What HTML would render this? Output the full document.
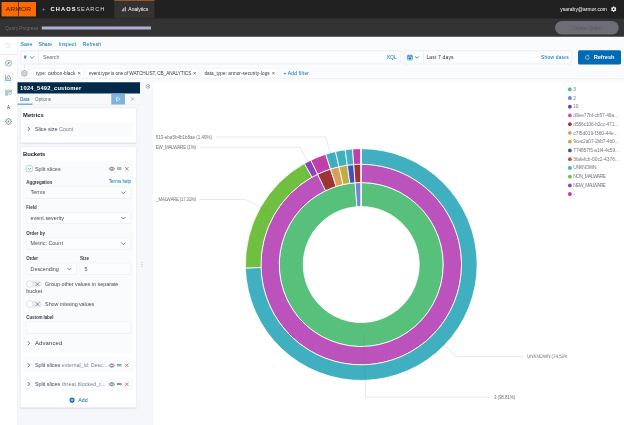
<!DOCTYPE html>
<html><head><meta charset="utf-8">
<style>
*{box-sizing:border-box;margin:0;padding:0}
html,body{width:624px;height:425px;overflow:hidden;background:#fff;font-family:"Liberation Sans",sans-serif;}
body{position:relative}
.a{position:absolute}
.t{position:absolute;white-space:nowrap;line-height:1}
.blue{color:#006bb4}
.box{position:absolute;background:#fbfcfd;border:2px solid #dfe3ea;border-radius:4px}
.pill{position:absolute;background:#fff;border:1.6px solid #dde2ea;border-radius:6px;height:37.2px;top:274.8px}
.cl{font-size:18px;color:#70737a}
.ptx{top:283.2px;font-size:18.8px;color:#343741}
.pill span{position:absolute;left:12px;top:9.2px;font-size:17.6px;color:#343741;white-space:nowrap;line-height:1}
.lab{font-size:18px;font-weight:bold;color:#3a3e48}
.inp{position:absolute;background:#fcfdfe;border:1.6px solid #dfe3ea;border-radius:4px;height:45.6px;box-shadow:0 1.6px 2.4px rgba(150,160,180,0.15)}
.leg{position:absolute;left:2293.2px;font-size:19.6px;color:#767a84;white-space:nowrap;line-height:1}
.dot{position:absolute;left:2272px;width:15.2px;height:15.2px;border-radius:50%;margin-top:-1.6px}
</style></head><body><div id="root" style="position:absolute;left:0;top:0;width:2496px;height:1700px;transform-origin:0 0;transform:scale(0.25);filter:contrast(1.0001)">

<!-- top dark bars -->
<div class="a" style="left:0;top:0;width:2496px;height:147.6px;background:#333333"></div>
<div class="a" style="left:0;top:0;width:2496px;height:74.4px;background:#212121"></div>
<!-- armor logo -->
<div class="a" style="left:5.6px;top:8px;width:138.4px;height:57.6px;background:#ff6a00;box-shadow:0 0 0 1.6px #0c1622"></div>
<div class="a" style="left:72.4px;top:8px;width:2.4px;height:57.6px;background:#3a2a1a"></div>
<svg class="a" style="left:0;top:0" width="160" height="76" viewBox="0 0 40 19"><text x="5.8" y="10.9" font-family="Liberation Sans, sans-serif" font-size="4.500" fill="#2e1804" textLength="25.400" lengthAdjust="spacingAndGlyphs">ARMOR</text></svg>
<div class="t" style="left:168.4px;top:26.4px;font-size:23.2px;color:#9a9a9a">+</div>
<div class="t" style="left:202.4px;top:24.8px;font-size:22.8px;color:#fff;font-weight:bold;letter-spacing:4.25px">CHAOS</div><div class="t" style="left:306px;top:24.8px;font-size:22.8px;color:#ddd;letter-spacing:3.23px">SEARCH</div>
<!-- analytics tab -->
<div class="a" style="left:456.8px;top:0;width:161.2px;height:74.4px;background:#333333;border-top:3.6px solid #c4621b"></div>
<svg class="a" style="left:486px;top:26px" width="20" height="20" viewBox="0 0 5 5"><rect x="0.3" y="3" width="0.9" height="2" fill="#ddd"/><rect x="1.8" y="1.6" width="0.9" height="3.4" fill="#ddd"/><rect x="3.3" y="0.2" width="0.9" height="4.8" fill="#ddd"/></svg>
<div class="t" style="left:513.2px;top:26.4px;font-size:20px;color:#fff">Analytics</div>
<div class="t" style="left:2240.8px;top:26.8px;font-size:19.6px;color:#fff;letter-spacing:0.34px">ysaraby@armor.com</div>
<svg class="a" style="left:2441.6px;top:24px" width="25.6" height="25.6" viewBox="0 0 24 24"><path fill="#fff" d="M19.4 13c.04-.3.06-.7.06-1s-.02-.7-.07-1l2.100-1.650c.2-.15.250-.42.130-.64l-2-3.460c-.12-.22-.39-.3-.61-.22l-2.490 1c-.52-.4-1.080-.73-1.690-.98l-.38-2.650C14.400 2.180 14.200 2 13.950 2h-4c-.25 0-.46.180-.49.420l-.38 2.650c-.61.250-1.170.59-1.690.98l-2.490-1c-.23-.09-.49 0-.61.220l-2 3.460c-.13.220-.07.490.12.640L4.500 11c-.04.300-.07.650-.07 1s.02.700.07 1l-2.100 1.650c-.19.150-.24.420-.12.640l2 3.460c.12.220.39.300.61.220l2.490-1c.52.400 1.080.73 1.690.98l.38 2.650c.03.240.24.420.49.420h4c.25 0 .46-.18.490-.42l.38-2.650c.61-.25 1.170-.59 1.690-.98l2.490 1c.23.090.490 0 .61-.22l2-3.460c.12-.22.070-.49-.12-.64L19.400 13zM12 15.500c-1.930 0-3.500-1.570-3.500-3.500s1.570-3.500 3.500-3.500 3.500 1.570 3.500 3.500-1.570 3.500-3.500 3.500z"/></svg>
<!-- query progress -->
<div class="t" style="left:20.8px;top:106.4px;font-size:18.8px;color:#6a6d73;letter-spacing:0.01px">Query Progress</div>
<div class="a" style="left:166.8px;top:106px;width:437.2px;height:12px;background:#aab3cf"></div>
<div class="a" style="left:2220px;top:84px;width:255.2px;height:54.4px;border-radius:28px;background:#6c6e75"></div>
<div class="t" style="left:2289.2px;top:104px;font-size:18.8px;color:#54565c;letter-spacing:0.16px">Cancel Query</div>

<!-- left nav -->
<div class="a" style="left:0;top:147.2px;width:69.6px;height:1552.8px;background:#fff;border-right:2px solid #d3dae6"></div>
<div class="a" style="left:0;top:217.6px;width:69.6px;height:2px;background:#d3dae6"></div>
<div class="a" style="left:12.8px;top:290.4px;width:41.6px;height:41.6px;background:#f2f5f9;border-radius:4px"></div>
<svg class="a" style="left:21.2px;top:170.4px" width="23.2" height="23.2" viewBox="0 0 16 16"><circle cx="8" cy="8" r="6.6" fill="none" stroke="#d3d6db" stroke-width="1.5"/><path d="M8 4.5V8.5H10.8" fill="none" stroke="#d3d6db" stroke-width="1.4"/></svg>
<svg class="a" style="left:19.6px;top:239.2px" width="28" height="28" viewBox="0 0 16 16"><circle cx="8" cy="8" r="6.8" fill="none" stroke="#6a6e78" stroke-width="1.3"/><path d="M11.6 4.4L9.3 9.3L4.4 11.6L6.7 6.7Z" fill="#1fa89b"/></svg>
<svg class="a" style="left:19.6px;top:298.4px" width="25.6" height="25.6" viewBox="0 0 16 16"><path d="M1 0.5V15H15.5" fill="none" stroke="#3fb5a8" stroke-width="1.8"/><path d="M4.8 12.5V6.8L9.2 2.8L13.6 6.8V12.5" fill="none" stroke="#555a66" stroke-width="1.5"/><path d="M9.2 9V12.5" stroke="#555a66" stroke-width="1.4"/></svg>
<svg class="a" style="left:20.4px;top:358.4px" width="27.2" height="24.8" viewBox="0 0 17 15.500"><rect x="1" y="0.8" width="15" height="3.6" rx="1" fill="none" stroke="#6a6e78" stroke-width="1.4"/><rect x="1" y="6.4" width="6" height="3.200" rx="0.800" fill="none" stroke="#3fb5a8" stroke-width="1.4"/><rect x="10" y="5.800" width="6" height="6.400" rx="1.500" fill="none" stroke="#3fb5a8" stroke-width="1.5"/><rect x="1" y="11.400" width="6" height="3.200" rx="0.800" fill="none" stroke="#6a6e78" stroke-width="1.4"/></svg>
<div class="a" style="left:17.6px;top:411.6px;width:32px;height:32px;border-radius:50%;border:1.6px solid #e8e8ea"></div><div class="t" style="left:27.6px;top:418.8px;font-size:18px;color:#3a3d46">A</div>
<svg class="a" style="left:19.6px;top:472.4px" width="28" height="28" viewBox="0 0 16 16"><path d="M6.80 1.10L9.20 1.10L9.26 2.75L10.82 3.40L12.03 2.27L13.73 3.97L12.60 5.18L13.25 6.74L14.90 6.80L14.90 9.20L13.25 9.26L12.60 10.82L13.73 12.03L12.03 13.73L10.82 12.60L9.26 13.25L9.20 14.90L6.80 14.90L6.74 13.25L5.18 12.60L3.97 13.73L2.27 12.03L3.40 10.82L2.75 9.26L1.10 9.20L1.10 6.80L2.75 6.74L3.40 5.18L2.27 3.97L3.97 2.27L5.18 3.40L6.74 2.75Z" fill="none" stroke="#5a5e68" stroke-width="1.3"/><circle cx="8" cy="8" r="2.3" fill="#3fb5a8"/></svg>

<!-- header area bg -->
<div class="a" style="left:70.4px;top:147.2px;width:2425.6px;height:181.6px;background:#fafbfd"></div>
<div class="t blue" style="left:82.4px;top:167.6px;font-size:20.4px">Save</div>
<div class="t blue" style="left:154.4px;top:167.6px;font-size:20.4px">Share</div>
<div class="t blue" style="left:235.2px;top:167.6px;font-size:20.4px;letter-spacing:0.61px">Inspect</div>
<div class="t blue" style="left:331.2px;top:167.6px;font-size:20.4px;letter-spacing:0.37px">Refresh</div>

<!-- query bar -->
<div class="box" style="left:82.4px;top:202.4px;width:1520px;height:54.4px"></div>
<div class="a" style="left:154.4px;top:202.4px;width:2px;height:54.4px;background:#dfe3ea"></div>
<div class="t blue" style="left:94.8px;top:219.2px;font-size:19.2px;font-weight:bold;font-style:italic">#</div>
<svg class="a" style="left:118.4px;top:222px" width="20.8" height="13.6" viewBox="0 0 10 6"><path d="M1 1L5 5L9 1" fill="none" stroke="#006bb4" stroke-width="1.300"/></svg>
<div class="t" style="left:172px;top:218.8px;font-size:20.8px;color:#6b6f78;letter-spacing:-0.12px">Search</div>
<div class="t blue" style="left:1549.2px;top:220px;font-size:18.4px">KQL</div>
<div class="a" style="left:97.2px;top:256.8px;width:2px;height:18.4px;background:#d3dae6"></div>

<!-- date picker -->
<div class="box" style="left:1615.2px;top:202.4px;width:674px;height:54.4px"></div>
<div class="a" style="left:1693.2px;top:202.4px;width:2px;height:54.4px;background:#dfe3ea"></div>
<svg class="a" style="left:1627.2px;top:217.2px" width="24.8" height="25.6" viewBox="0 0 16 16"><rect x="1.500" y="2.500" width="13" height="12" rx="1.500" fill="#cfe0f0" stroke="#006bb4" stroke-width="1.400"/><path d="M1.500 6H14.500M5 1V4M11 1V4" stroke="#006bb4" stroke-width="1.400"/><rect x="5" y="8.500" width="6" height="3.500" fill="#006bb4"/></svg>
<svg class="a" style="left:1658px;top:222px" width="20.8" height="13.6" viewBox="0 0 10 6"><path d="M1 1L5 5L9 1" fill="none" stroke="#006bb4" stroke-width="1.300"/></svg>
<div class="t" style="left:1705.6px;top:219.2px;font-size:20.4px;color:#343741;letter-spacing:0.45px">Last 7 days</div>
<div class="t blue" style="left:2164.4px;top:221.2px;font-size:19.6px;letter-spacing:0.92px">Show dates</div>
<!-- refresh btn -->
<div class="a" style="left:2312px;top:201.2px;width:172px;height:56.8px;background:#006bb4;border-radius:6px"></div>
<svg class="a" style="left:2339.2px;top:218.8px" width="21.6" height="21.6" viewBox="0 0 16 16"><path d="M13.500 8A5.500 5.500 0 1 1 10.800 3.300" fill="none" stroke="#fff" stroke-width="1.500"/><path d="M9.500 0.500L12.500 3.300L9.500 5.800" fill="none" stroke="#fff" stroke-width="1.400"/></svg>
<div class="t" style="left:2374.8px;top:219.2px;font-size:22.4px;color:#fff;font-weight:bold;letter-spacing:-0.08px">Refresh</div>

<!-- filter row -->
<svg class="a" style="left:83.6px;top:279.6px" width="27.2" height="27.2" viewBox="0 0 16 16"><path d="M6.80 1.10L9.20 1.10L9.26 2.75L10.82 3.40L12.03 2.27L13.73 3.97L12.60 5.18L13.25 6.74L14.90 6.80L14.90 9.20L13.25 9.26L12.60 10.82L13.73 12.03L12.03 13.73L10.82 12.60L9.26 13.25L9.20 14.90L6.80 14.90L6.74 13.25L5.18 12.60L3.97 13.73L2.27 12.03L3.40 10.82L2.75 9.26L1.10 9.20L1.10 6.80L2.75 6.74L3.40 5.18L2.27 3.97L3.97 2.27L5.18 3.40L6.74 2.75Z" fill="none" stroke="#6a6e78" stroke-width="1.200"/><circle cx="8" cy="8" r="2.400" fill="none" stroke="#6a6e78" stroke-width="1.100"/></svg><div class="a" style="left:113.6px;top:292.8px;width:19.6px;height:1.6px;background:#dde2ea"></div>
<div class="pill" style="left:133.2px;width:201.6px"></div><div class="t ptx" style="left:143.2px;letter-spacing:0.25px">type: carbon-black</div><svg class="a" style="left:309.6px;top:286px" width="13.6" height="13.6" viewBox="0 0 10 10"><path d="M1 1L9 9M9 1L1 9" stroke="#343741" stroke-width="1.6"/></svg>
<div class="pill" style="left:344.8px;width:452px"></div><div class="t ptx" style="left:355.6px;letter-spacing:-0.30px">event.type is one of WATCHLIST, CB_ANALYTICS</div><svg class="a" style="left:772.4px;top:286px" width="13.6" height="13.6" viewBox="0 0 10 10"><path d="M1 1L9 9M9 1L1 9" stroke="#343741" stroke-width="1.6"/></svg>
<div class="pill" style="left:806.8px;width:305.6px"></div><div class="t ptx" style="left:817.6px;letter-spacing:0.26px">data_type: armor-security-logs</div><svg class="a" style="left:1087.2px;top:286px" width="13.6" height="13.6" viewBox="0 0 10 10"><path d="M1 1L9 9M9 1L1 9" stroke="#343741" stroke-width="1.6"/></svg>
<div class="t blue" style="left:1134px;top:283.6px;font-size:19.6px;letter-spacing:0.80px">+ Add filter</div>

<!-- editor sidebar -->
<div class="a" style="left:70.4px;top:313.6px;width:2425.6px;height:2.4px;background:#e6e9ef"></div>
<div class="a" style="left:70.4px;top:327.6px;width:540.8px;height:1372.4px;background:#f5f7fa"></div>
<div class="a" style="left:70.4px;top:374.4px;width:489.2px;height:44px;background:#f7f9fb;border-bottom:1.6px solid #e3e7ee"></div>
<div class="a" style="left:70.4px;top:328.8px;width:489.2px;height:45.6px;background:#032b49"></div>
<div class="t" style="left:80.4px;top:340.8px;font-size:23.2px;color:#fff;font-weight:bold;letter-spacing:0.66px">1024_5492_customer</div>
<div class="t blue" style="left:80px;top:389.2px;font-size:18px">Data</div>
<div class="a" style="left:70.4px;top:415.2px;width:60px;height:3.2px;background:#006bb4"></div>
<div class="t" style="left:140.4px;top:389.2px;font-size:18.4px;color:#69707d;letter-spacing:0.09px">Options</div>
<div class="a" style="left:444.8px;top:374.8px;width:55.2px;height:43.2px;background:#7eb3dc"></div>
<svg class="a" style="left:462.4px;top:385.2px" width="21.6" height="23.2" viewBox="0 0 10 10"><path d="M2 1.200L8.500 5L2 8.800Z" fill="none" stroke="#fff" stroke-width="1.100"/></svg>
<svg class="a" style="left:520.8px;top:387.2px" width="18.4" height="18.4" viewBox="0 0 10 10"><path d="M1.500 1.500L8.500 8.500M8.500 1.500L1.500 8.500" stroke="#7d8592" stroke-width="1.200"/></svg>
<svg class="a" style="left:582px;top:336px" width="19.2" height="19.2" viewBox="0 0 16 16"><circle cx="8" cy="8" r="6.400" fill="none" stroke="#6f7683" stroke-width="1.700"/><path d="M10 4.200L5.800 8L10 11.800Z" fill="#6f7683"/></svg>
<svg class="a" style="left:565.2px;top:1047.2px" width="5.6" height="21.6" viewBox="0 0 2 8"><circle cx="1" cy="1.200" r="0.800" fill="#9aa1ad"/><circle cx="1" cy="4" r="0.800" fill="#9aa1ad"/><circle cx="1" cy="6.800" r="0.800" fill="#9aa1ad"/></svg>

<!-- metrics panel -->
<div class="a" style="left:81.2px;top:430.8px;width:466px;height:141.6px;background:#fff;border:2px solid #e3e7ee;border-radius:6px;box-shadow:0 2px 4px rgba(0,0,0,0.080)"></div>
<div class="t" style="left:92.4px;top:448px;font-size:23.2px;color:#1a1c21;font-weight:bold;letter-spacing:0.29px">Metrics</div>
<div class="a" style="left:93.2px;top:489.2px;width:442px;height:53.6px;background:#fafbfd"></div>
<svg class="a" style="left:109.2px;top:506px" width="12" height="20" viewBox="0 0 6 10"><path d="M1 1L5 5L1 9" fill="none" stroke="#3d414b" stroke-width="1.450"/></svg>
<div class="t" style="left:139.6px;top:503.8px;font-size:21.6px;color:#4a4d57;letter-spacing:-0.10px">Slice size <span style="color:#7a808c">Count</span></div>

<!-- buckets panel -->
<div class="a" style="left:81.2px;top:586px;width:466px;height:1045.2px;background:#fff;border:2px solid #e3e7ee;border-radius:6px;box-shadow:0 2px 4px rgba(0,0,0,0.080)"></div>
<div class="t" style="left:92.4px;top:604px;font-size:23.2px;color:#1a1c21;font-weight:bold;letter-spacing:-0.26px">Buckets</div>
<div class="a" style="left:93.2px;top:645.2px;width:442px;height:768.4px;background:#fafbfd"></div>
<div class="a" style="left:104.4px;top:662px;width:25.6px;height:25.6px;border:2px solid #7db0d8;border-radius:4.8px;background:#fff"></div>
<svg class="a" style="left:108.8px;top:670.4px" width="16.8" height="10.4" viewBox="0 0 10 6"><path d="M1 1L5 5L9 1" fill="none" stroke="#006bb4" stroke-width="1.400"/></svg>
<div class="t" style="left:139.6px;top:664.2px;font-size:21.6px;color:#4a4d57;letter-spacing:0.07px">Split slices</div>
<!-- eye, =, x -->
<svg class="a" style="left:434.4px;top:664.8px" width="26.4" height="20" viewBox="0 0 12 9"><path d="M0.700 4.500C3 0.600 9 0.600 11.300 4.500C9 8.400 3 8.400 0.700 4.500Z" fill="none" stroke="#555a64" stroke-width="1.100"/><circle cx="6" cy="4.500" r="2.100" fill="none" stroke="#555a64" stroke-width="1.100"/></svg>
<div class="a" style="left:468px;top:670.4px;width:17.6px;height:3px;background:#666b76"></div>
<div class="a" style="left:468px;top:675px;width:17.6px;height:3px;background:#666b76"></div>
<svg class="a" style="left:497.6px;top:665.6px" width="18.4" height="18.4" viewBox="0 0 10 10"><path d="M1.300 1.300L8.700 8.700M8.700 1.300L1.300 8.700" stroke="#d0352b" stroke-width="1.400"/></svg>

<div class="t lab" style="left:105.2px;top:719.6px;letter-spacing:-0.25px">Aggregation</div>
<div class="t blue" style="left:435.2px;top:718px;font-size:18px;letter-spacing:0.12px">Terms help</div>
<div class="inp" style="left:104.8px;top:747.2px;width:418.4px"></div>
<div class="t" style="left:122.4px;top:759px;font-size:21.6px;color:#4a4d57;letter-spacing:-0.16px">Terms</div>
<svg class="a" style="left:483.2px;top:764.4px" width="20.8" height="12.8" viewBox="0 0 10 6"><path d="M1 1L5 5L9 1" fill="none" stroke="#343741" stroke-width="1.200"/></svg>

<div class="t lab" style="left:105.2px;top:821.2px">Field</div>
<div class="inp" style="left:104.8px;top:848.8px;width:418.4px"></div>
<div class="t" style="left:122.4px;top:861px;font-size:21.6px;color:#4a4d57;letter-spacing:0.05px">event.severity</div>
<svg class="a" style="left:483.2px;top:866px" width="20.8" height="12.8" viewBox="0 0 10 6"><path d="M1 1L5 5L9 1" fill="none" stroke="#343741" stroke-width="1.200"/></svg>

<div class="t lab" style="left:105.2px;top:923.2px">Order by</div>
<div class="inp" style="left:104.8px;top:950.4px;width:418.4px"></div>
<div class="t" style="left:122.4px;top:963px;font-size:21.6px;color:#4a4d57;letter-spacing:0.06px">Metric: Count</div>
<svg class="a" style="left:483.2px;top:967.6px" width="20.8" height="12.8" viewBox="0 0 10 6"><path d="M1 1L5 5L9 1" fill="none" stroke="#343741" stroke-width="1.200"/></svg>

<div class="t lab" style="left:105.2px;top:1024.8px;letter-spacing:-0.45px">Order</div>
<div class="t lab" style="left:320.4px;top:1024.8px">Size</div>
<div class="inp" style="left:104.8px;top:1052px;width:202.4px"></div>
<div class="t" style="left:122.4px;top:1064.2px;font-size:21.6px;color:#4a4d57;letter-spacing:-0.16px">Descending</div>
<svg class="a" style="left:267.2px;top:1069.2px" width="20.8" height="12.8" viewBox="0 0 10 6"><path d="M1 1L5 5L9 1" fill="none" stroke="#343741" stroke-width="1.200"/></svg>
<div class="inp" style="left:320px;top:1052px;width:203.2px"></div>
<div class="t" style="left:337.6px;top:1064.2px;font-size:21.6px;color:#4a4d57">5</div>

<!-- switches -->
<div class="a" style="left:104.8px;top:1122.4px;width:62.4px;height:26.4px;border-radius:13.2px;background:#e9edf3"></div>
<div class="a" style="left:104.8px;top:1121.6px;width:28px;height:28px;border-radius:50%;background:#fff;border:2px solid #c2c8d2"></div>
<svg class="a" style="left:138.8px;top:1125.6px" width="21.6" height="21.6" viewBox="0 0 10 10"><path d="M1.500 1.500L8.500 8.500M8.500 1.500L1.500 8.500" stroke="#343741" stroke-width="0.900"/></svg>
<div class="t" style="left:180.4px;top:1124.2px;font-size:21.6px;color:#4a4d57;letter-spacing:-0.12px">Group other values in separate</div>
<div class="t" style="left:105.2px;top:1153.4px;font-size:21.6px;color:#4a4d57;letter-spacing:0.06px">bucket</div>
<div class="a" style="left:104.8px;top:1203.2px;width:62.4px;height:26.4px;border-radius:13.2px;background:#e9edf3"></div>
<div class="a" style="left:104.8px;top:1202.4px;width:28px;height:28px;border-radius:50%;background:#fff;border:2px solid #c2c8d2"></div>
<svg class="a" style="left:138.8px;top:1206px" width="21.6" height="21.6" viewBox="0 0 10 10"><path d="M1.500 1.500L8.500 8.500M8.500 1.500L1.500 8.500" stroke="#343741" stroke-width="0.900"/></svg>
<div class="t" style="left:180.4px;top:1204.6px;font-size:21.6px;color:#4a4d57;letter-spacing:-0.28px">Show missing values</div>

<div class="t lab" style="left:105.2px;top:1259.2px;letter-spacing:-0.42px">Custom label</div>
<div class="inp" style="left:104.8px;top:1287.2px;width:418.4px;height:45.6px"></div>
<svg class="a" style="left:109.2px;top:1363.2px" width="12" height="20" viewBox="0 0 6 10"><path d="M1 1L5 5L1 9" fill="none" stroke="#3d414b" stroke-width="1.450"/></svg>
<div class="t" style="left:139.6px;top:1362.4px;font-size:23.6px;color:#3a3d46;letter-spacing:0.63px">Advanced</div>

<!-- collapsed buckets -->
<div class="a" style="left:93.2px;top:1430.4px;width:442px;height:60px;background:#fafbfd"></div>
<svg class="a" style="left:109.2px;top:1451.2px" width="12" height="20" viewBox="0 0 6 10"><path d="M1 1L5 5L1 9" fill="none" stroke="#3d414b" stroke-width="1.450"/></svg>
<div class="t" style="left:139.6px;top:1450.2px;font-size:21.6px;color:#4a4d57;letter-spacing:-0.07px">Split slices</div><div class="t" style="left:248px;top:1452.4px;font-size:19.6px;color:#737985;letter-spacing:0.71px">external_id: Desc...</div>
<svg class="a" style="left:434.4px;top:1451.6px" width="26.4" height="20" viewBox="0 0 12 9"><path d="M0.700 4.500C3 0.600 9 0.600 11.300 4.500C9 8.400 3 8.400 0.700 4.500Z" fill="none" stroke="#555a64" stroke-width="1.100"/><circle cx="6" cy="4.500" r="2.100" fill="none" stroke="#555a64" stroke-width="1.100"/></svg>
<div class="a" style="left:468px;top:1457.2px;width:17.6px;height:3px;background:#666b76"></div>
<div class="a" style="left:468px;top:1461.8px;width:17.6px;height:3px;background:#666b76"></div>
<svg class="a" style="left:497.6px;top:1452.4px" width="18.4" height="18.4" viewBox="0 0 10 10"><path d="M1.300 1.300L8.700 8.700M8.700 1.300L1.300 8.700" stroke="#d0352b" stroke-width="1.400"/></svg>

<div class="a" style="left:93.2px;top:1505.6px;width:442px;height:60px;background:#fafbfd"></div>
<svg class="a" style="left:109.2px;top:1526.4px" width="12" height="20" viewBox="0 0 6 10"><path d="M1 1L5 5L1 9" fill="none" stroke="#3d414b" stroke-width="1.450"/></svg>
<div class="t" style="left:139.6px;top:1525.4px;font-size:21.6px;color:#4a4d57;letter-spacing:-0.07px">Split slices</div><div class="t" style="left:248px;top:1527.6px;font-size:19.6px;color:#737985;letter-spacing:1.00px">threat.blocked_t...</div>
<svg class="a" style="left:434.4px;top:1526.8px" width="26.4" height="20" viewBox="0 0 12 9"><path d="M0.700 4.500C3 0.600 9 0.600 11.300 4.500C9 8.400 3 8.400 0.700 4.500Z" fill="none" stroke="#555a64" stroke-width="1.100"/><circle cx="6" cy="4.500" r="2.100" fill="none" stroke="#555a64" stroke-width="1.100"/></svg>
<div class="a" style="left:468px;top:1532.4px;width:17.6px;height:3px;background:#666b76"></div>
<div class="a" style="left:468px;top:1537px;width:17.6px;height:3px;background:#666b76"></div>
<svg class="a" style="left:497.6px;top:1527.6px" width="18.4" height="18.4" viewBox="0 0 10 10"><path d="M1.300 1.300L8.700 8.700M8.700 1.300L1.300 8.700" stroke="#d0352b" stroke-width="1.400"/></svg>

<svg class="a" style="left:276.8px;top:1589.2px" width="22.4" height="22.4" viewBox="0 0 12 12"><circle cx="6" cy="6" r="5.600" fill="#006bb4"/><path d="M6 3V9M3 6H9" stroke="#fff" stroke-width="1.400"/></svg>
<div class="t blue" style="left:313.2px;top:1590.8px;font-size:20.8px;letter-spacing:0.33px">Add</div>

<!-- chart -->
<svg class="a" style="left:0;top:0" width="2496" height="1700" viewBox="0 0 624 425">
<g stroke="#fff" stroke-width="0.850" stroke-linejoin="round">
<path d="M361.25 182.55A82.0 82.0 0 1 1 355.12 182.78L356.92 206.71A58.0 58.0 0 1 0 361.25 206.55Z" fill="#57c17b"/>
<path d="M355.12 182.78A82.0 82.0 0 0 1 360.99 182.55L361.07 206.55A58.0 58.0 0 0 0 356.92 206.71Z" fill="#6f87d8"/>
<path d="M360.99 182.55A82.0 82.0 0 0 1 361.25 182.55L361.25 206.55A58.0 58.0 0 0 0 361.07 206.55Z" fill="#663db8"/>
<path d="M361.25 164.25A100.3 100.3 0 1 1 317.63 174.23L325.59 190.71A82.0 82.0 0 1 0 361.25 182.55Z" fill="#bc52bc"/>
<path d="M317.63 174.23A100.3 100.3 0 0 1 330.50 169.08L336.11 186.50A82.0 82.0 0 0 0 325.59 190.71Z" fill="#9e3533"/>
<path d="M330.50 169.08A100.3 100.3 0 0 1 339.00 166.75L343.06 184.59A82.0 82.0 0 0 0 336.11 186.50Z" fill="#daa05d"/>
<path d="M339.00 166.75A100.3 100.3 0 0 1 347.30 165.22L349.85 183.35A82.0 82.0 0 0 0 343.06 184.59Z" fill="#bfaf40"/>
<path d="M347.30 165.22A100.3 100.3 0 0 1 353.76 164.53L355.12 182.78A82.0 82.0 0 0 0 349.85 183.35Z" fill="#4050bf"/>
<path d="M353.76 164.53A100.3 100.3 0 0 1 360.93 164.25L360.99 182.55A82.0 82.0 0 0 0 355.12 182.78Z" fill="#9e3533"/>
<path d="M360.93 164.25A100.3 100.3 0 0 1 361.25 164.25L361.25 182.55A82.0 82.0 0 0 0 360.99 182.55Z" fill="#663db8"/>
<path d="M361.25 148.65A115.9 115.9 0 1 1 245.40 267.97L260.99 267.51A100.3 100.3 0 1 0 361.25 164.25Z" fill="#40afbf"/>
<path d="M245.40 267.97A115.9 115.9 0 0 1 304.40 163.55L312.05 177.15A100.3 100.3 0 0 0 260.99 267.51Z" fill="#70bf40"/>
<path d="M304.40 163.55A115.9 115.9 0 0 1 310.85 160.18L317.63 174.23A100.3 100.3 0 0 0 312.05 177.15Z" fill="#8f40bf"/>
<path d="M310.85 160.18A115.9 115.9 0 0 1 325.71 154.23L330.50 169.08A100.3 100.3 0 0 0 317.63 174.23Z" fill="#bf40a7"/>
<path d="M325.71 154.23A115.9 115.9 0 0 1 335.54 151.54L339.00 166.75A100.3 100.3 0 0 0 330.50 169.08Z" fill="#40afbf"/>
<path d="M335.54 151.54A115.9 115.9 0 0 1 345.14 149.78L347.30 165.22A100.3 100.3 0 0 0 339.00 166.75Z" fill="#40afbf"/>
<path d="M345.14 149.78A115.9 115.9 0 0 1 352.59 148.97L353.76 164.53A100.3 100.3 0 0 0 347.30 165.22Z" fill="#40afbf"/>
<path d="M352.59 148.97A115.9 115.9 0 0 1 360.89 148.65L360.93 164.25A100.3 100.3 0 0 0 353.76 164.53Z" fill="#bf40a7"/>
<path d="M360.89 148.65A115.9 115.9 0 0 1 361.25 148.65L361.25 164.25A100.3 100.3 0 0 0 360.93 164.25Z" fill="#40afbf"/>
</g>
<g fill="none" stroke="rgba(85,90,110,0.240)" stroke-width="0.600">
<path d="M216.300 137H325.700L336.600 176"/>
<path d="M199.600 147.100H299.900L311 167"/>
<path d="M199.600 199.600H246.200L267 211.300"/>
<path d="M524 356.700H456.200L439 340.200"/>
<path d="M490.500 397.200H365.700L363.900 334.200"/>
</g>
</svg>
<div class="t cl" style="left:623.2px;top:540px;letter-spacing:0.04px">513-eba5b4b1b8ae (1.49%)</div>
<div class="t cl" style="left:623.2px;top:580.4px;letter-spacing:-0.74px">EW_MALWARE (1%)</div>
<div class="t cl" style="left:625.2px;top:790.4px;letter-spacing:-1.12px">_MALWARE (17.31%)</div>
<div class="a" style="left:2108.4px;top:1418.4px;width:160px;height:24px;overflow:hidden"><div class="t cl" style="left:0;top:0;letter-spacing:-0.24px">UNKNOWN (74.53%)</div></div>
<div class="t cl" style="left:1975.6px;top:1580.8px;letter-spacing:-0.33px">3 (98.81%)</div>

<!-- legend -->
<div class="dot" style="top:351px;background:#57c17b"></div><div class="leg" style="top:347.2px">3</div>
<div class="dot" style="top:385.92px;background:#6f87d8"></div><div class="leg" style="top:382.12px">2</div>
<div class="dot" style="top:420.84px;background:#663db8"></div><div class="leg" style="top:417.04px;letter-spacing:-1.50px">10</div>
<div class="dot" style="top:455.76px;background:#bc52bc"></div><div class="leg" style="top:451.96px;letter-spacing:-0.39px">d9ee77bf-cb57-49a...</div>
<div class="dot" style="top:490.68px;background:#9e3533"></div><div class="leg" style="top:486.88px;letter-spacing:-0.56px">d556c106-b2cc-471...</div>
<div class="dot" style="top:525.6px;background:#daa05d"></div><div class="leg" style="top:521.8px;letter-spacing:-0.18px">c7f5d019-f360-44e...</div>
<div class="dot" style="top:560.52px;background:#bfaf40"></div><div class="leg" style="top:556.72px;letter-spacing:-0.53px">9cec2a07-2bb7-4b0...</div>
<div class="dot" style="top:595.44px;background:#4050bf"></div><div class="leg" style="top:591.64px;letter-spacing:-0.46px">774857f5-a1f4-4c59...</div>
<div class="dot" style="top:630.36px;background:#bf5040"></div><div class="leg" style="top:626.56px;letter-spacing:-0.15px">3fafefcb-00c2-4376...</div>
<div class="dot" style="top:665.28px;background:#40afbf"></div><div class="leg" style="top:661.48px;letter-spacing:-1.69px">UNKNOWN</div>
<div class="dot" style="top:700.2px;background:#70bf40"></div><div class="leg" style="top:696.4px;letter-spacing:-2.12px">NON_MALWARE</div>
<div class="dot" style="top:735.12px;background:#8f40bf"></div><div class="leg" style="top:731.32px;letter-spacing:-2.32px">NEW_MALWARE</div>
<div class="dot" style="top:770.04px;background:#bf40a7"></div><div class="leg" style="top:766.24px">-</div>
</div></body></html>
